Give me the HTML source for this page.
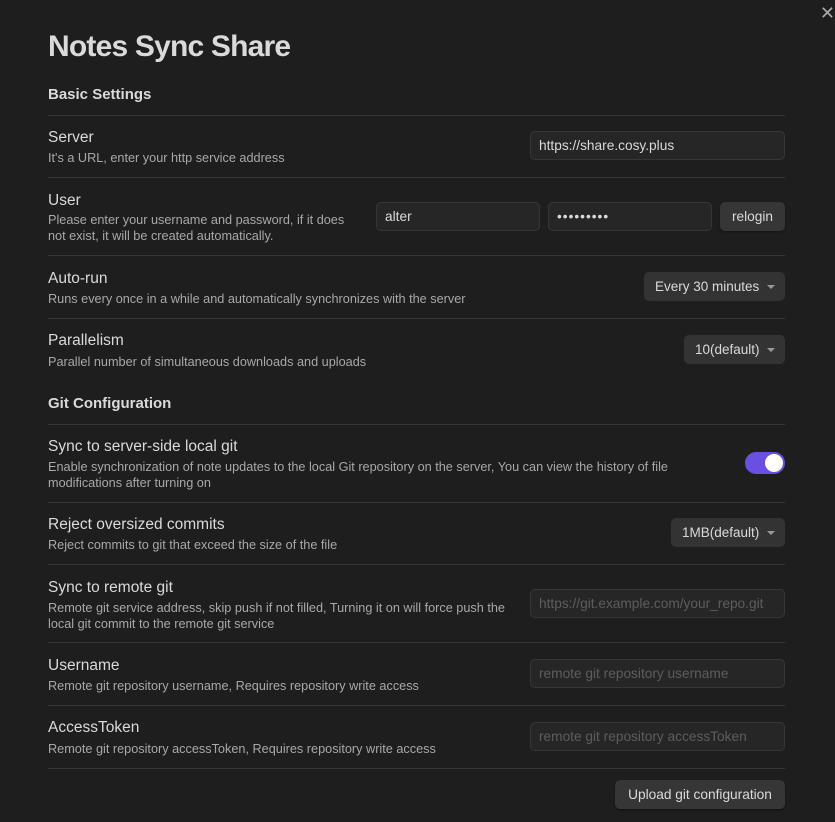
<!DOCTYPE html><html><head><style>
body{margin:0;width:835px;height:822px;background:#1e1e1e;font-family:"Liberation Sans",sans-serif;color:#dadada;position:relative;overflow:hidden}
.a{position:absolute;white-space:nowrap}
.t{font-size:30px;font-weight:bold;left:48px;top:30px;letter-spacing:-0.8px;color:#dadada}
.h{font-size:15px;font-weight:bold;left:48px}
.n{font-size:15.5px;left:48px}
.d{font-size:12.7px;left:48px;color:#a8a8a8;line-height:16px}
.l{position:absolute;left:48px;width:737px;height:1px;background:#363636}
.i{position:absolute;background:#262626;border:1px solid #363636;border-radius:5px;box-sizing:border-box;font-size:13.7px;padding-left:8px;line-height:27px;color:#dadada}
.p{color:#5d5d5d}
.b{position:absolute;background:#363636;border-radius:5px;box-sizing:border-box;font-size:13.7px;text-align:center;line-height:29px;color:#dadada;box-shadow:0 1px 2px rgba(0,0,0,.4)}
.s{position:absolute;background:#333;border-radius:5px;box-sizing:border-box;font-size:13.5px;line-height:29px;padding-left:11px;color:#dadada}
.s:after{content:"";position:absolute;right:10px;top:13px;border-left:4px solid transparent;border-right:4px solid transparent;border-top:4px solid #999}
</style></head><body>
<div class="a" style="right:0;top:3px;font-size:18px;color:#aaa">✕</div>
<div class="a t">Notes Sync Share</div>
<div class="a h" style="top:86px">Basic Settings</div>
<div class="l" style="top:115px"></div>
<div class="a n" style="top:129px">Server</div>
<div class="a d" style="top:150px">It's a URL, enter your http service address</div>
<div class="i" style="left:530px;top:131px;width:255px;height:29px">https://share.cosy.plus</div>
<div class="l" style="top:177px"></div>
<div class="a n" style="top:192px">User</div>
<div class="a d" style="top:212px">Please enter your username and password, if it does<br>not exist, it will be created automatically.</div>
<div class="i" style="left:376px;top:202px;width:164px;height:29px">alter</div>
<div class="i" style="left:548px;top:202px;width:164px;height:29px;letter-spacing:1px">•••••••••</div>
<div class="b" style="left:720px;top:202px;width:65px;height:29px">relogin</div>
<div class="l" style="top:255px"></div>
<div class="a n" style="top:270px">Auto-run</div>
<div class="a d" style="top:291px">Runs every once in a while and automatically synchronizes with the server</div>
<div class="s" style="left:644px;top:272px;width:141px;height:29px">Every 30 minutes</div>
<div class="l" style="top:318px"></div>
<div class="a n" style="top:332px">Parallelism</div>
<div class="a d" style="top:354px">Parallel number of simultaneous downloads and uploads</div>
<div class="s" style="left:684px;top:335px;width:101px;height:29px">10(default)</div>
<div class="a h" style="top:395px">Git Configuration</div>
<div class="l" style="top:424px"></div>
<div class="a n" style="top:438px">Sync to server-side local git</div>
<div class="a d" style="top:459px">Enable synchronization of note updates to the local Git repository on the server, You can view the history of file<br>modifications after turning on</div>
<div style="position:absolute;left:745px;top:452px;width:40px;height:22px;border-radius:11px;background:#6b4fe0"></div>
<div style="position:absolute;left:765px;top:454px;width:18px;height:18px;border-radius:9px;background:#fff"></div>
<div class="l" style="top:502px"></div>
<div class="a n" style="top:516px">Reject oversized commits</div>
<div class="a d" style="top:537px">Reject commits to git that exceed the size of the file</div>
<div class="s" style="left:671px;top:518px;width:114px;height:29px">1MB(default)</div>
<div class="l" style="top:564px"></div>
<div class="a n" style="top:579px">Sync to remote git</div>
<div class="a d" style="top:600px">Remote git service address, skip push if not filled, Turning it on will force push the<br>local git commit to the remote git service</div>
<div class="i p" style="left:530px;top:589px;width:255px;height:29px">https://git.example.com/your_repo.git</div>
<div class="l" style="top:642px"></div>
<div class="a n" style="top:657px">Username</div>
<div class="a d" style="top:678px">Remote git repository username, Requires repository write access</div>
<div class="i p" style="left:530px;top:659px;width:255px;height:29px">remote git repository username</div>
<div class="l" style="top:705px"></div>
<div class="a n" style="top:719px">AccessToken</div>
<div class="a d" style="top:741px">Remote git repository accessToken, Requires repository write access</div>
<div class="i p" style="left:530px;top:722px;width:255px;height:29px">remote git repository accessToken</div>
<div class="l" style="top:768px"></div>
<div class="b" style="left:615px;top:780px;width:170px;height:29px">Upload git configuration</div>
</body></html>
